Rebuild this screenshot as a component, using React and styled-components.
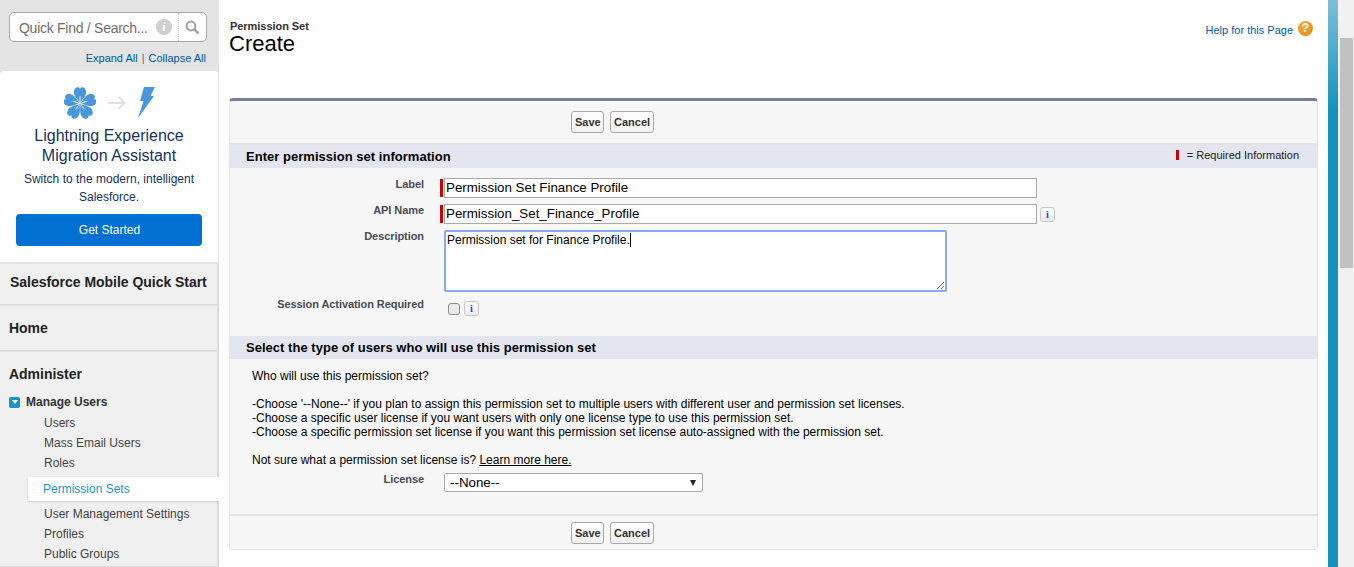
import React from 'react';
import styled, { createGlobalStyle } from 'styled-components';

const GlobalStyle = createGlobalStyle`
    html, body {
        margin: 0;
        padding: 0;
        background: #fff;
        overflow: hidden;
    }
    * {
        box-sizing: border-box;
    }
`;

const Shell = styled.div`
    width: 1354px;
    height: 567px;
    display: flex;
    overflow: hidden;
    font-family: "Liberation Sans", Arial, sans-serif;
    color: #000;
`;

/* sidebar */
const Sidebar = styled.aside`
    width: 219px;
    height: 567px;
    flex: none;
    background: #e4e4e4;
    overflow: hidden;
`;

const SearchArea = styled.div`
    height: 71px;
    padding: 12px 12px 0 9px;
`;

const SearchBox = styled.div`
    height: 30px;
    display: flex;
    align-items: center;
    background: #fff;
    border: 1px solid #a8a8a8;
    border-radius: 5px;
`;

const SearchText = styled.span`
    flex: 1;
    padding: 2px 0 0 9px;
    font-size: 14px;
    letter-spacing: -0.27px;
    color: #6f6f6f;
    white-space: nowrap;
`;

const SearchInfo = styled.span`
    width: 16px;
    height: 16px;
    margin-right: 6px;
    border-radius: 50%;
    background: #cfcfcf;
    color: #fff;
    font: italic bold 12px/16px "Liberation Serif", serif;
    text-align: center;
`;

const SearchButton = styled.span`
    width: 28px;
    height: 100%;
    display: flex;
    align-items: center;
    justify-content: center;
    border-left: 1px dotted #cfcfcf;
`;

const TreeLinks = styled.div`
    margin: 10px 1px 0 0;
    display: flex;
    justify-content: flex-end;
    gap: 4px;
    font-size: 11px;
    line-height: 13px;
    color: #666;
`;

const BlueLink = styled.a`
    color: #015ba7;
    text-decoration: none;
`;

const PromoCard = styled.div`
    height: 192px;
    padding-top: 16px;
    margin-right: 1px;
    display: flex;
    flex-direction: column;
    align-items: center;
    background: #fff;
    border-radius: 4px 4px 0 0;
    border-bottom: 1px solid #dfe3ec;
    text-align: center;
`;

const PromoIcons = styled.div`
    height: 32px;
    display: flex;
    align-items: center;
    gap: 12px;
`;

const PromoTitle = styled.div`
    margin-top: 7px;
    font-size: 16px;
    line-height: 20px;
    color: #16325c;
`;

const PromoText = styled.div`
    margin-top: 4px;
    width: 190px;
    font-size: 12px;
    line-height: 18px;
    color: #16325c;
`;

const StartButton = styled.button`
    margin: 8px 0 0 -1px;
    width: 186px;
    height: 32px;
    padding: 0 0 0 2px;
    border: none;
    border-radius: 4px;
    background: #0070d2;
    color: #fff;
    font: 12px "Liberation Sans", Arial, sans-serif;
`;

const NavSection = styled.div`
    margin-top: 1px;
    height: ${props => props.$height}px;
    background: #f0f0f0;
    border-bottom: 1px solid #dcdcdc;
    border-right: 2px solid #dcdcdc;
    padding: ${props => props.$top}px 0 0 ${props => props.$left}px;
`;

const NavHeading = styled.div`
    font-size: 14px;
    line-height: 18px;
    font-weight: bold;
    letter-spacing: -0.03px;
    color: #222;
    white-space: nowrap;
`;

const ManageRow = styled.div`
    margin-top: 11px;
    display: flex;
    align-items: center;
    gap: 6px;
    font-size: 12px;
    line-height: 16px;
    font-weight: bold;
    color: #333;
`;

const Toggle = styled.span`
    width: 11px;
    height: 11px;
    border-radius: 2px;
    background: #1797c0;
    display: flex;
    align-items: center;
    justify-content: center;
    &::after {
        content: "";
        border-top: 4px solid #fff;
        border-left: 3px solid transparent;
        border-right: 3px solid transparent;
    }
`;

const NavList = styled.div`
    margin: 3px -2px 0 -9px;
    display: flex;
    flex-direction: column;
`;

const NavItem = styled.a`
    height: 20px;
    padding-left: 44px;
    font-size: 12px;
    line-height: 20px;
    color: #444;
`;

const NavActive = styled.a`
    height: 24px;
    margin: 4px 0 3px 28px;
    padding-left: 15px;
    background: #fff;
    font-size: 12px;
    line-height: 24px;
    color: #1797c0;
    box-shadow: 0 1px 2px rgba(0, 0, 0, 0.15);
`;

/* main column */
const Main = styled.main`
    width: 1089px;
    margin-left: 10px;
    flex: none;
`;

const PageHead = styled.header`
    height: 98px;
    padding-top: 20px;
    display: flex;
    justify-content: space-between;
`;

const PageType = styled.div`
    font-size: 11px;
    line-height: 13px;
    font-weight: bold;
    letter-spacing: -0.05px;
    color: #333;
    margin-left: 1px;
`;

const PageTitle = styled.h1`
    margin: 0;
    font-size: 22px;
    line-height: 21px;
    font-weight: normal;
    color: #000;
`;

const HelpLink = styled.div`
    height: 16px;
    margin-right: 5px;
    display: flex;
    align-items: center;
    gap: 5px;
    font-size: 11px;
    color: #015ba7;
`;

const HelpText = styled(BlueLink)`
    padding-top: 4px;
`;

const HelpIcon = styled.span`
    width: 15px;
    height: 15px;
    border-radius: 50%;
    background: radial-gradient(circle at 40% 35%, #f6b23c, #d9820f);
    color: #fff;
    font-size: 12px;
    line-height: 15px;
    font-weight: bold;
    text-align: center;
`;

const Panel = styled.section`
    height: 452px;
    background: #f7f7f7;
    border: 1px solid #e6e6e6;
    border-top: 3px solid #747e96;
    border-radius: 4px;
`;

const ButtonRow = styled.div`
    height: ${props => props.$height}px;
    padding: ${props => props.$top}px 0 0 341px;
    display: flex;
    gap: 6px;
    border-${props => props.$edge}: 2px solid #e3e3e3;
`;

const Button = styled.button`
    height: 22px;
    padding: 0 5px 0 3px;
    width: ${props => props.$width}px;
    border: 1px solid #a8a8a8;
    border-radius: 3px;
    background: linear-gradient(#fff, #f0f0f0);
    color: #333;
    font: bold 11px "Liberation Sans", Arial, sans-serif;
`;

const SectionBar = styled.div`
    height: 23px;
    padding: 0 18px 0 16px;
    display: flex;
    align-items: center;
    justify-content: space-between;
    background: #e3e6ee;
`;

const SectionTitle = styled.h3`
    margin: 0;
    font-size: 13px;
    font-weight: bold;
    letter-spacing: 0.03px;
    color: #000;
`;

const Legend = styled.div`
    padding-bottom: 3px;
    display: flex;
    align-items: center;
    gap: 8px;
    font-size: 11px;
    color: #222;
`;

const RedMark = styled.span`
    width: 3px;
    height: ${props => props.$height}px;
    flex: none;
    background: #c00;
`;

const Form = styled.div`
    height: 168px;
    padding-top: 10px;
    display: grid;
    grid-template-columns: 194px 1fr;
    grid-auto-rows: min-content;
    row-gap: 6px;
    column-gap: 16px;
`;

const FieldLabel = styled.label`
    font-size: 11px;
    line-height: 13px;
    font-weight: bold;
    letter-spacing: -0.07px;
    color: #4a4a56;
    text-align: right;
    white-space: nowrap;
`;

const FieldRow = styled.div`
    display: flex;
    align-items: center;
    gap: 1px;
`;

const CheckRow = styled.div`
    display: flex;
    align-items: center;
    gap: 4px;
    margin: 3px 0 0 8px;
`;

const TextInput = styled.input`
    width: 593px;
    height: 20px;
    padding: 0 1px 2px;
    border: 1px solid #a9a9a9;
    background: #fff;
    font: 13.33px "Liberation Sans", Arial, sans-serif;
    color: #000;
    outline: none;
`;

const AreaWrap = styled.div`
    position: relative;
    width: 503px;
    height: 62px;
    margin-left: 4px;
`;

const Area = styled.textarea`
    display: block;
    width: 100%;
    height: 100%;
    padding: 1px;
    border: 2px solid #8aabe6;
    border-radius: 2px;
    background: #fff;
    font: 12px/15px "Liberation Sans", Arial, sans-serif;
    color: #000;
    outline: none;
`;

const Caret = styled.span`
    position: absolute;
    left: 186px;
    top: 3px;
    width: 1px;
    height: 14px;
    background: #000;
`;

const InfoBadge = styled.span`
    width: 15px;
    height: 15px;
    flex: none;
    margin-left: ${props => props.$gap || 0}px;
    border: 1px solid #c8c8c8;
    border-radius: 3px;
    background: linear-gradient(#fff, #e8ecf2);
    color: #0a58b8;
    font: bold 10px/13px "Liberation Serif", serif;
    text-align: center;
`;

const Check = styled.input`
    appearance: none;
    width: 12px;
    height: 12px;
    margin: 0;
    border: 1px solid #8f8f8f;
    border-radius: 3px;
    background: #e9e9e9;
`;

const CopyBlock = styled.div`
    height: 114px;
    padding: 10px 0 0 22px;
    font-size: 12px;
    line-height: 14px;
    color: #000;
`;

const CopyLine = styled.div`
    min-height: 14px;
`;

const CopyLink = styled.a`
    color: #000;
    text-decoration: underline;
`;

const LicenseRow = styled.div`
    height: 41px;
    display: grid;
    grid-template-columns: 194px 1fr;
    column-gap: 16px;
`;

const SelectBox = styled.div`
    position: relative;
    width: 259px;
    height: 19px;
    margin-left: 4px;
`;

const Select = styled.select`
    appearance: none;
    display: block;
    width: 100%;
    height: 100%;
    padding: 0 0 0 5px;
    border: 1px solid #a9a9a9;
    border-radius: 2px;
    background: #fff;
    font: 13.33px "Liberation Sans", Arial, sans-serif;
    color: #000;
`;

const SelectArrow = styled.span`
    position: absolute;
    right: 7px;
    top: 7px;
    border-top: 6px solid #222;
    border-left: 3px solid transparent;
    border-right: 3px solid transparent;
    pointer-events: none;
`;

/* right edge */
const Stripe = styled.div`
    width: 10px;
    height: 567px;
    margin-left: 10px;
    flex: none;
    background: linear-gradient(#7dbfd8 0, #1492bb 110px, #1492bb 100%);
`;

const ScrollTrack = styled.div`
    width: 16px;
    height: 567px;
    flex: none;
    padding: 38px 1px 0 2px;
    background: #f1f1f1;
`;

const ScrollThumb = styled.div`
    height: 230px;
    background: #c1c1c1;
`;

const FlowerLogo = () => (
    <svg width="32" height="32" viewBox="0 0 32 32">
        {[0, 72, 144, 216, 288].map(angle => (
            <g key={angle} transform={`rotate(${angle} 16 16.5)`}>
                <path
                    fill="#4a96dc"
                    d="M16 16 C13.8 12.8 9.9 9.4 9.9 5 C9.9 2 11.8 0.2 13.6 0.2 C14.8 0.2 15.6 0.9 16 1.9 C16.4 0.9 17.2 0.2 18.4 0.2 C20.2 0.2 22.1 2 22.1 5 C22.1 9.4 18.2 12.8 16 16 Z"
                />
                <path d="M16 14.5 V9.5" stroke="#fff" strokeWidth="0.9" strokeLinecap="round" />
            </g>
        ))}
    </svg>
);

const ArrowIcon = () => (
    <svg width="18" height="14" viewBox="0 0 18 14" fill="none" stroke="#dde1ea" strokeWidth="2">
        <path d="M0 7 H16.5 M10.5 1 L16.5 7 L10.5 13" />
    </svg>
);

const BoltIcon = () => (
    <svg width="17" height="32" viewBox="0 0 17 32">
        <path fill="#4a96dc" d="M6 0 H17 L12.5 9 H16 L0 31 L5.5 14 H2 Z" />
    </svg>
);

const SearchIcon = () => (
    <svg width="15" height="15" viewBox="0 0 15 15" fill="none" stroke="#a0a0a0">
        <circle cx="6" cy="6" r="4.4" strokeWidth="2" />
        <path d="M9.4 9.4 L13.6 13.6" strokeWidth="2.6" />
    </svg>
);

const App = () => {
    return (
        <Shell>
            <GlobalStyle />
            <Sidebar>
                <SearchArea>
                    <SearchBox>
                        <SearchText>Quick Find / Search...</SearchText>
                        <SearchInfo>i</SearchInfo>
                        <SearchButton><SearchIcon /></SearchButton>
                    </SearchBox>
                    <TreeLinks>
                        <BlueLink>Expand All</BlueLink>|<BlueLink>Collapse All</BlueLink>
                    </TreeLinks>
                </SearchArea>
                <PromoCard>
                    <PromoIcons>
                        <FlowerLogo />
                        <ArrowIcon />
                        <BoltIcon />
                    </PromoIcons>
                    <PromoTitle>Lightning Experience<br />Migration Assistant</PromoTitle>
                    <PromoText>Switch to the modern, intelligent Salesforce.</PromoText>
                    <StartButton>Get Started</StartButton>
                </PromoCard>
                <NavSection $height={41} $top={9} $left={10}>
                    <NavHeading>Salesforce Mobile Quick Start</NavHeading>
                </NavSection>
                <NavSection $height={45} $top={13} $left={9}>
                    <NavHeading>Home</NavHeading>
                </NavSection>
                <NavSection $height={215} $top={13} $left={9}>
                    <NavHeading>Administer</NavHeading>
                    <ManageRow><Toggle />Manage Users</ManageRow>
                    <NavList>
                        <NavItem>Users</NavItem>
                        <NavItem>Mass Email Users</NavItem>
                        <NavItem>Roles</NavItem>
                        <NavActive>Permission Sets</NavActive>
                        <NavItem>User Management Settings</NavItem>
                        <NavItem>Profiles</NavItem>
                        <NavItem>Public Groups</NavItem>
                    </NavList>
                </NavSection>
            </Sidebar>

            <Main>
                <PageHead>
                    <div>
                        <PageType>Permission Set</PageType>
                        <PageTitle>Create</PageTitle>
                    </div>
                    <HelpLink>
                        <HelpText>Help for this Page</HelpText>
                        <HelpIcon>?</HelpIcon>
                    </HelpLink>
                </PageHead>
                <Panel>
                    <ButtonRow $height={44} $top={10} $edge="bottom">
                        <Button $width={33}>Save</Button>
                        <Button $width={44}>Cancel</Button>
                    </ButtonRow>
                    <SectionBar>
                        <SectionTitle>Enter permission set information</SectionTitle>
                        <Legend><RedMark $height={10} />= Required Information</Legend>
                    </SectionBar>
                    <Form>
                        <FieldLabel>Label</FieldLabel>
                        <FieldRow>
                            <RedMark $height={18} />
                            <TextInput defaultValue="Permission Set Finance Profile" />
                        </FieldRow>
                        <FieldLabel>API Name</FieldLabel>
                        <FieldRow>
                            <RedMark $height={18} />
                            <TextInput defaultValue="Permission_Set_Finance_Profile" />
                            <InfoBadge $gap={2}>i</InfoBadge>
                        </FieldRow>
                        <FieldLabel>Description</FieldLabel>
                        <AreaWrap>
                            <Area defaultValue="Permission set for Finance Profile." />
                            <Caret />
                        </AreaWrap>
                        <FieldLabel>Session Activation Required</FieldLabel>
                        <CheckRow>
                            <Check type="checkbox" />
                            <InfoBadge>i</InfoBadge>
                        </CheckRow>
                    </Form>
                    <SectionBar>
                        <SectionTitle>Select the type of users who will use this permission set</SectionTitle>
                    </SectionBar>
                    <CopyBlock>
                        <CopyLine>Who will use this permission set?</CopyLine>
                        <CopyLine />
                        <CopyLine>-Choose '--None--' if you plan to assign this permission set to multiple users with different user and permission set licenses.</CopyLine>
                        <CopyLine>-Choose a specific user license if you want users with only one license type to use this permission set.</CopyLine>
                        <CopyLine>-Choose a specific permission set license if you want this permission set license auto-assigned with the permission set.</CopyLine>
                        <CopyLine />
                        <CopyLine>Not sure what a permission set license is? <CopyLink>Learn more here.</CopyLink></CopyLine>
                    </CopyBlock>
                    <LicenseRow>
                        <FieldLabel>License</FieldLabel>
                        <SelectBox>
                            <Select>
                                <option>--None--</option>
                            </Select>
                            <SelectArrow />
                        </SelectBox>
                    </LicenseRow>
                    <ButtonRow $height={35} $top={6} $edge="top">
                        <Button $width={33}>Save</Button>
                        <Button $width={44}>Cancel</Button>
                    </ButtonRow>
                </Panel>
            </Main>

            <Stripe />
            <ScrollTrack>
                <ScrollThumb />
            </ScrollTrack>
        </Shell>
    );
};

export default App;
